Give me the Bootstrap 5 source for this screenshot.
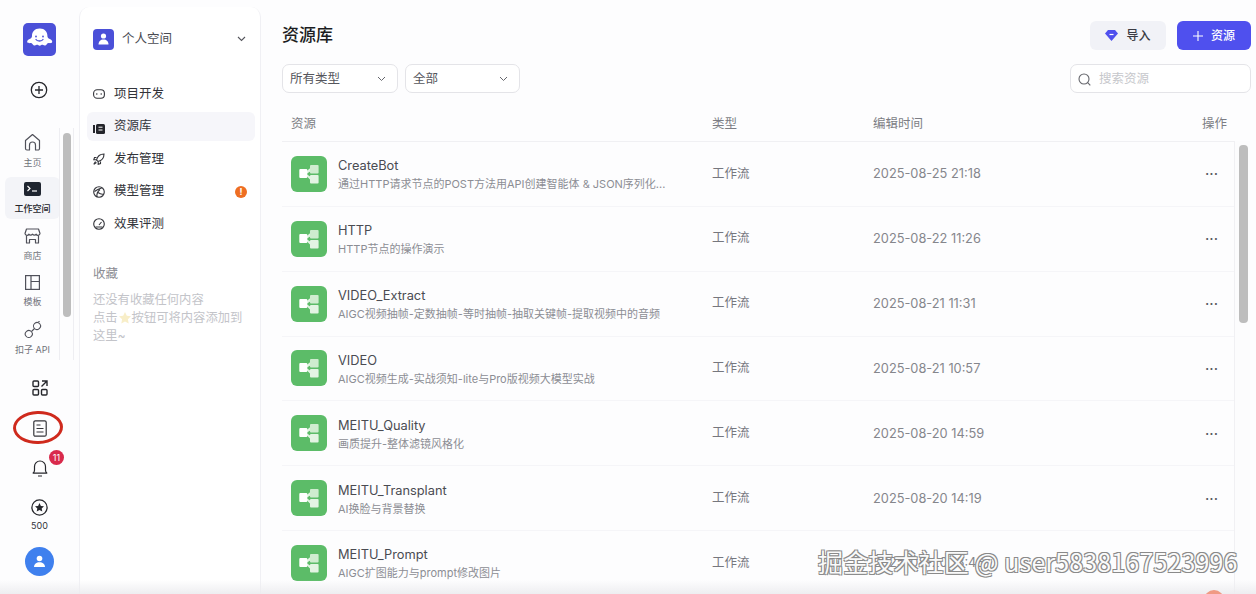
<!DOCTYPE html>
<html lang="zh-CN">

<head>
    <meta charset="UTF-8">
    <meta name="viewport" content="width=device-width, initial-scale=1.0">
    <title>资源库</title>
    <link rel="stylesheet" href="https://cdn.jsdelivr.net/npm/bootstrap@5.3.3/dist/css/bootstrap.min.css">
    <style>
        html, body {
            height: 594px;
            overflow: hidden;
        }

        body {
            font-family: "Inter", "Noto Sans CJK SC", sans-serif;
            background: #fdfdfe;
            color: #2c2d33;
            position: relative;
        }

        .app-shell {
            height: 594px;
        }

        /* rail on the far left */
        .rail {
            width: 79px;
            flex: none;
            padding-top: 23px;
            position: relative;
        }

        .logo-box {
            width: 33px;
            height: 33px;
            margin-left: 23px;
            border-radius: 5px;
            background: #4b50d8;
        }

        .rail-plus {
            margin: 25px 0 0 30px;
            height: 18px;
            line-height: 0;
        }

        .rail-scroll {
            margin-top: 29px;
            height: 232px;
            width: 74px;
            border-right: 1px solid #eeeef2;
            position: relative;
        }

        .rail-scroll::before {
            content: "";
            position: absolute;
            left: 59px;
            top: 0;
            bottom: 0;
            border-left: 1px solid #eeeef2;
        }

        .rail-item {
            width: 55px;
            margin-left: 5px;
            margin-bottom: 2px;
            border-radius: 6px;
            font-size: 9px;
            line-height: 12px;
            color: #70727a;
        }

        .rail-item svg {
            flex: none;
        }

        .rail-label {
            margin-top: 6px;
            white-space: nowrap;
        }

        .item-home { height: 47px; }
        .item-home svg { margin-top: 5px; }
        .item-shop { height: 45px; }
        .item-tpl { height: 44px; }
        .item-api .rail-label { margin-top: 5px; }

        .rail-item.is-on {
            background: #f3f4f8;
            color: #24252b;
            font-weight: 500;
            height: 42px;
            margin-bottom: 9px;
        }

        .is-on svg { margin-top: 5px; }
        .is-on .rail-label { margin-top: 7px; }

        .rail-bar {
            position: absolute;
            left: 63px;
            top: 5px;
            width: 8px;
            height: 184px;
            background: #bdbdbd;
            border-radius: 4px;
        }

        .rail-tools {
            margin-top: 20px;
        }

        .tool-slot {
            height: 39.5px;
        }

        .tool-count {
            margin-top: 5px;
            font-size: 9px;
            line-height: 10px;
            color: #34353a;
            text-align: center;
        }

        .note-ring {
            position: absolute;
            left: 13px;
            top: 411px;
            width: 50px;
            height: 33px;
            border: 3px solid #cf2a1d;
            border-radius: 50%;
            transform: rotate(-2deg);
        }

        .bell-badge {
            position: absolute;
            left: 49px;
            top: 450px;
            width: 15px;
            height: 15px;
            border-radius: 50%;
            background: #d92a4c;
            color: #fff;
            font-size: 9px;
            line-height: 15px;
            text-align: center;
        }

        .avatar-dot {
            width: 29px;
            height: 29px;
            border-radius: 50%;
            background: #3f80ee;
            margin: 16px 0 0 25px;
        }

        /* second column */
        .side-panel {
            width: 182px;
            flex: none;
            background: #fff;
            border-left: 1px solid #f0f0f4;
            border-right: 1px solid #f0f0f4;
            border-radius: 10px 10px 0 0;
            margin-top: 7px;
            padding: 21px 12px 0 13px;
        }

        .space-pick {
            height: 22px;
            font-size: 12.5px;
            color: #4a4b52;
        }

        .space-icon {
            width: 21px;
            height: 21px;
            border-radius: 4px;
            background: #4b50d8;
        }

        .space-chevron {
            margin-right: 2px;
        }

        .side-menu {
            margin-top: 29.5px;
        }

        .side-link {
            height: 29px;
            margin-bottom: 3.5px;
            padding: 0 8px 0 6px;
            margin-left: -6px;
            border-radius: 6px;
            font-size: 12.5px;
            color: #33343a;
            width: 168px;
        }

        .side-link svg {
            flex: none;
            margin-right: 9px;
        }

        .side-link.is-on {
            background: #f6f6fa;
        }

        .warn-dot {
            width: 12px;
            height: 12px;
            border-radius: 50%;
            background: #ee6e22;
            color: #fff;
            font-size: 9px;
            font-weight: 700;
            line-height: 12px;
            text-align: center;
        }

        .fav-title {
            margin-top: 26px;
            font-size: 12.5px;
            color: #8b8c93;
            line-height: 18px;
        }

        .fav-hint {
            margin-top: 8px;
            font-size: 12.3px;
            line-height: 18px;
            color: #c3c4c9;
            width: 155px;
        }

        .fav-star {
            vertical-align: -2px;
        }

        /* main part */
        .main-pane {
            flex: 1;
            min-width: 0;
            padding: 21px 5px 0 21px;
            position: relative;
        }

        .page-title {
            font-size: 17px;
            font-weight: 500;
            line-height: 26px;
            margin: 0 0 2px;
            color: #1c1d22;
        }

        .btn-import, .btn-add {
            height: 29px;
            border-radius: 6px;
            font-size: 12px;
            font-weight: 500;
            padding: 0;
            border: none;
        }

        .btn-import {
            width: 76px;
            background: #f1f2f7;
            color: #3a3b42;
        }

        .btn-add {
            width: 74px;
            margin-left: 11px;
            background: #4f50ee;
            color: #fff;
        }

        .btn-import:hover { background: #f1f2f7; color: #3a3b42; }
        .btn-add:hover { background: #4f50ee; color: #fff; }

        .filter-row {
            margin-top: 14px;
            height: 29px;
        }

        .pick-box {
            height: 29px;
            border: 1px solid #e4e4e8;
            border-radius: 7px;
            background: #fff;
            padding: 1px 7px 0;
            font-size: 12.5px;
            color: #55565c;
        }

        .pick-type { width: 116px; }
        .pick-all { width: 115px; margin-left: 7px; }

        .search-box {
            width: 181px;
            height: 29px;
            border: 1px solid #e4e4e8;
            border-radius: 7px;
            background: #fff;
            padding: 1px 7px 0;
            font-size: 12.5px;
            color: #c6c7cb;
        }

        .list-head {
            height: 49px;
            padding-top: 15px;
            font-size: 12.5px;
            color: #7c7d84;
            border-bottom: 1px solid #f0f0f3;
            padding-left: 9px;
            width: 952px;
        }

        .col-name { width: 421px; flex: none; }
        .col-type { width: 161px; flex: none; }
        .col-time { width: 332px; flex: none; }
        .list-head .col-time { width: 329px; }

        .res-row {
            height: 64.85px;
            padding-left: 9px;
            width: 952px;
            border-bottom: 1px solid #f5f5f8;
            font-size: 12.5px;
            color: #76777e;
        }

        .res-row .col-time {
            font-size: 12.8px;
            color: #85868c;
        }

        .res-icon {
            width: 36px;
            height: 36px;
            border-radius: 6px;
            background: #5cbc68;
            flex: none;
            margin-right: 11px;
        }

        .res-text {
            padding-top: 2px;
        }

        .res-title {
            font-size: 12.8px;
            line-height: 18px;
            color: #4a4b52;
        }

        .res-desc {
            margin-top: 1px;
            font-size: 11px;
            line-height: 16px;
            color: #8c8d94;
            white-space: nowrap;
        }

        .row-more {
            font-size: 15px;
            line-height: 15px;
            color: #55565c;
        }

        .list-bar-track {
            position: absolute;
            left: 973px;
            top: 141px;
            width: 16px;
            height: 453px;
            border-left: 1px solid #f0f0f3;
            background: #fcfcfd;
        }

        .list-bar {
            position: absolute;
            left: 4px;
            top: 4px;
            width: 9px;
            height: 178px;
            border-radius: 4px;
            background: #bdbdbd;
        }

        .bottom-fade {
            position: absolute;
            left: 0;
            right: 0;
            bottom: 0;
            height: 14px;
            background: linear-gradient(to bottom, rgba(240, 240, 243, 0), rgba(236, 236, 239, 0.9));
            pointer-events: none;
        }

        .corner-blob {
            position: absolute;
            left: 1204px;
            top: 590px;
            width: 20px;
            height: 20px;
            border-radius: 50%;
            background: #f09a84;
        }

        .site-mark {
            position: absolute;
            left: 818px;
            top: 544px;
            font-family: "Noto Sans CJK SC", sans-serif;
            font-size: 25px;
            line-height: 34px;
            letter-spacing: .15px;
            color: #fafafa;
            white-space: nowrap;
            text-shadow: -1px -1px 0 #8a8a8a, 1px -1px 0 #8a8a8a, -1px 1px 0 #8a8a8a, 1px 1px 0 #8a8a8a;
        }
    </style>
</head>

<body>
    <div class="app-shell d-flex">

        <!-- rail -->
        <div class="rail">
            <div class="logo-box d-flex align-items-center justify-content-center">
                <svg width="29" height="29" viewBox="0 0 29 29">
                    <path d="M14.500 3.500c-4.800 0-7.500 3.300-7.500 7.300 0 1.300-.5 2.300-1.800 3-1.500.7-3.400 1.600-3 3.200.3 1.200 1.900 1.300 3.200 1.100 1-.1 1.700.3 2.200 1.100.8 1.300 2.400 1.700 3.600.8.600-.4 1.300-.4 1.900 0 1 .9 2.200.9 3.200 0 .6-.4 1.300-.4 1.900 0 1.200.9 2.800.5 3.600-.8.500-.8 1.200-1.200 2.200-1.100 1.300.2 2.900.1 3.200-1.100.4-1.600-1.500-2.500-3-3.200-1.300-.7-1.800-1.700-1.800-3 0-4-2.700-7.300-7.500-7.300z" fill="#fff"/>
                    <circle cx="11" cy="11.500" r=".9" fill="#4b50d8"/>
                    <circle cx="18" cy="11.500" r=".9" fill="#4b50d8"/>
                    <path d="M11 14.500c1.200 2 5.800 2 7 0" fill="none" stroke="#4b50d8" stroke-width="1.300" stroke-linecap="round"/>
                </svg>
            </div>
            <div class="rail-plus">
                <svg width="18" height="18" viewBox="0 0 18 18" fill="none" stroke="#26272c" stroke-width="1.300">
                    <circle cx="9" cy="9" r="7.700"/>
                    <path d="M9 5v8M5 9h8"/>
                </svg>
            </div>
            <div class="rail-scroll">
                <div class="rail-item item-home d-flex flex-column align-items-center">
                    <svg width="17" height="18" viewBox="0 0 17 18" fill="none" stroke="#50515a" stroke-width="1.200" stroke-linejoin="round">
                        <path d="M1.500 7.500 8.500 1.500l7 6v8a1.500 1.500 0 0 1-1.500 1.500h-2.500v-5a3 3 0 0 0-6 0v5H3a1.500 1.500 0 0 1-1.500-1.500z"/>
                    </svg>
                    <span class="rail-label">主页</span>
                </div>
                <div class="rail-item is-on d-flex flex-column align-items-center">
                    <svg width="17" height="14" viewBox="0 0 17 14">
                        <rect width="17" height="14" rx="2" fill="#1f2530"/>
                        <path d="M3.500 4l2.500 2.500L3.500 9" fill="none" stroke="#fff" stroke-width="1.200"/>
                        <path d="M8 9h5" stroke="#fff" stroke-width="1.200"/>
                    </svg>
                    <span class="rail-label">工作空间</span>
                </div>
                <div class="rail-item item-shop d-flex flex-column align-items-center">
                    <svg width="17" height="16" viewBox="0 0 17 16" fill="none" stroke="#50515a" stroke-width="1.200" stroke-linejoin="round">
                        <path d="M2.500 1h12l1.500 4.500a2 2 0 0 1-3.800.7 2.300 2.300 0 0 1-3.700 0 2.300 2.300 0 0 1-3.700 0A2 2 0 0 1 1 5.500z"/>
                        <path d="M2.500 8v7h3v-3.500h6V15h3V8"/>
                    </svg>
                    <span class="rail-label">商店</span>
                </div>
                <div class="rail-item item-tpl d-flex flex-column align-items-center">
                    <svg width="15" height="15" viewBox="0 0 15 15" fill="none" stroke="#50515a" stroke-width="1.200">
                        <rect x=".6" y=".6" width="13.800" height="13.800"/>
                        <path d="M6 .6v13.800M6 6.500h8.400"/>
                    </svg>
                    <span class="rail-label">模板</span>
                </div>
                <div class="rail-item item-api d-flex flex-column align-items-center">
                    <svg width="18" height="18" viewBox="0 0 18 18" fill="none" stroke="#50515a" stroke-width="1.100">
                        <rect x="1.300" y="9.500" width="7" height="7" rx="3.500" transform="rotate(-40 4.800 13)"/>
                        <rect x="9.500" y="1.500" width="7" height="7" rx="3.500" transform="rotate(-40 13 5)"/>
                        <path d="M7.500 10.500 10.500 7.500M14.500 1l1-1"/>
                    </svg>
                    <span class="rail-label">扣子 API</span>
                </div>
                <div class="rail-bar"></div>
            </div>
            <div class="rail-tools">
                <div class="tool-slot d-flex justify-content-center">
                    <svg width="16" height="16" viewBox="0 0 16 16" fill="none" stroke="#26272c" stroke-width="1.400">
                        <rect x="1" y="1" width="5.500" height="5.500" rx="1"/>
                        <rect x="1" y="9.500" width="5.500" height="5.500" rx="1"/>
                        <rect x="9.500" y="9.500" width="5.500" height="5.500" rx="1"/>
                        <path d="M10 1h5v5M15 1 9.500 6.500"/>
                    </svg>
                </div>
                <div class="tool-slot d-flex justify-content-center">
                    <svg width="14" height="17" viewBox="0 0 14 17" fill="none" stroke="#34353a" stroke-width="1.200">
                        <rect x=".8" y=".8" width="12.400" height="15.400" rx="1.500"/>
                        <path d="M3.500 5h4M3.500 8.500h7M3.500 12h7"/>
                    </svg>
                </div>
                <div class="tool-slot d-flex justify-content-center">
                    <svg width="16" height="18" viewBox="0 0 16 18" fill="none" stroke="#26272c" stroke-width="1.200">
                        <path d="M.8 14.200c1.300-.6 1.700-1.500 1.700-3V7.500a5.500 5.500 0 0 1 11 0v3.700c0 1.500.4 2.400 1.700 3zM6 17h4"/>
                    </svg>
                </div>
                <div class="d-flex flex-column align-items-center">
                    <svg width="17" height="17" viewBox="0 0 17 17">
                        <circle cx="8.500" cy="8.500" r="7.600" fill="none" stroke="#26272c" stroke-width="1.300"/>
                        <path d="M8.500 4l1.400 2.900 3.100.4-2.300 2.200.6 3.100-2.800-1.500-2.800 1.500.6-3.100L4 7.300l3.100-.4z" fill="#26272c"/>
                    </svg>
                    <div class="tool-count">500</div>
                </div>
                <div class="avatar-dot d-flex align-items-center justify-content-center">
                    <svg width="13" height="13" viewBox="0 0 13 13" fill="#fff">
                        <circle cx="6.500" cy="3.500" r="2.800"/>
                        <path d="M1 12c0-3 2.500-4.800 5.500-4.800S12 9 12 12z"/>
                    </svg>
                </div>
            </div>
            <div class="note-ring"></div>
            <div class="bell-badge">11</div>
        </div>

        <!-- second column -->
        <div class="side-panel">
            <div class="space-pick d-flex align-items-center">
                <div class="space-icon d-flex align-items-center justify-content-center me-2">
                    <svg width="11" height="12" viewBox="0 0 11 12" fill="#fff">
                        <circle cx="5.500" cy="3" r="2.600"/>
                        <path d="M.5 11.500c0-3 2-5 5-5s5 2 5 5z"/>
                    </svg>
                </div>
                <span class="flex-grow-1">个人空间</span>
                <svg class="space-chevron" width="9" height="6" viewBox="0 0 9 6" fill="none" stroke="#55565c" stroke-width="1.100"><path d="M1 1l3.500 3.500L8 1"/></svg>
            </div>
            <div class="side-menu">
                <div class="side-link d-flex align-items-center">
                    <svg width="12" height="12" viewBox="0 0 12 12" fill="none" stroke="#33343a" stroke-width="1.100">
                        <rect x=".6" y="1.800" width="10.800" height="8.400" rx="3.500"/>
                        <path d="M3.800 5.200v1.500M8.200 5.200v1.500"/>
                    </svg>
                    <span>项目开发</span>
                </div>
                <div class="side-link is-on d-flex align-items-center">
                    <svg width="12" height="12" viewBox="0 0 12 12">
                        <rect x="0" y="2" width="2" height="8" fill="#24252b"/>
                        <rect x="3" y="1" width="9" height="10" rx="1.500" fill="#24252b"/>
                        <path d="M5.500 4.200h4M5.500 7h4" stroke="#fff"/>
                    </svg>
                    <span>资源库</span>
                </div>
                <div class="side-link d-flex align-items-center">
                    <svg width="12" height="12" viewBox="0 0 12 12" fill="none" stroke="#33343a" stroke-width="1.100">
                        <path d="M11 1C7.500 1 4.500 3 3.500 7L5 8.500C9 7.500 11 4.500 11 1z"/>
                        <path d="M3.500 4.500H1.500L.8 6.800h2.400M7.500 8.500v2l-2.300.8V8.800M2.500 8.500 .8 11.200l2.700-1.700"/>
                    </svg>
                    <span>发布管理</span>
                </div>
                <div class="side-link d-flex align-items-center">
                    <svg width="12" height="12" viewBox="0 0 12 12" fill="none" stroke="#33343a" stroke-width="1.100">
                        <circle cx="6" cy="6" r="5.300"/>
                        <path d="M1.500 5.500c2.500-2 5-3 7.500-3.800M4 11c-.5-3 .5-5.500 3-7.500M5 6.500c2 1.500 4 2 6 1.500"/>
                    </svg>
                    <span class="flex-grow-1">模型管理</span>
                    <span class="warn-dot">!</span>
                </div>
                <div class="side-link d-flex align-items-center">
                    <svg width="12" height="12" viewBox="0 0 12 12" fill="none" stroke="#33343a" stroke-width="1.100">
                        <circle cx="6" cy="6" r="5.300"/>
                        <path d="M6 7l2.500-3M2.500 9h7"/>
                    </svg>
                    <span>效果评测</span>
                </div>
            </div>
            <div class="fav-title">收藏</div>
            <div class="fav-hint">还没有收藏任何内容<br>点击<svg class="fav-star" width="14" height="13" viewBox="0 0 14 13"><path d="M7 1l1.800 3.800 4.200.5-3.100 2.900.8 4.200L7 10.400l-3.700 2 .8-4.200L1 5.300l4.200-.5z" fill="#f8eec8"/></svg>按钮可将内容添加到这里~</div>
        </div>

        <!-- main -->
        <div class="main-pane">
            <div class="d-flex align-items-center justify-content-between">
                <h1 class="page-title">资源库</h1>
                <div class="d-flex">
                    <button class="btn btn-import d-flex align-items-center justify-content-center gap-2">
                        <svg width="13" height="11" viewBox="0 0 13 11"><path d="M3 0h7l3 3.500L6.500 11 0 3.500z" fill="#4f50ee"/><path d="M4.500 4.500h4" stroke="#fff" stroke-width="1.200"/></svg>
                        导入
                    </button>
                    <button class="btn btn-add d-flex align-items-center justify-content-center gap-2">
                        <svg width="10" height="10" viewBox="0 0 10 10" stroke="#fff" stroke-width="1.100"><path d="M5 0v10M0 5h10"/></svg>
                        资源
                    </button>
                </div>
            </div>

            <div class="filter-row d-flex">
                <div class="pick-box pick-type d-flex align-items-center justify-content-between">
                    <span>所有类型</span>
                    <svg class="me-1" width="9" height="6" viewBox="0 0 9 6" fill="none" stroke="#66676d" stroke-width="1"><path d="M1 1l3.500 3.500L8 1"/></svg>
                </div>
                <div class="pick-box pick-all d-flex align-items-center justify-content-between">
                    <span>全部</span>
                    <svg class="me-1" width="9" height="6" viewBox="0 0 9 6" fill="none" stroke="#66676d" stroke-width="1"><path d="M1 1l3.500 3.500L8 1"/></svg>
                </div>
                <div class="search-box ms-auto d-flex align-items-center gap-2">
                    <svg width="13" height="13" viewBox="0 0 13 13" fill="none" stroke="#66676d" stroke-width="1.100"><circle cx="6" cy="6" r="5"/><path d="M9.700 9.700 12.300 12.300"/></svg>
                    <span>搜索资源</span>
                </div>
            </div>

            <div class="list-head d-flex align-items-center">
                <div class="col-name">资源</div>
                <div class="col-type">类型</div>
                <div class="col-time">编辑时间</div>
                <div>操作</div>
            </div>

            <div id="res-list"></div>

            <div class="list-bar-track"><div class="list-bar"></div></div>
        </div>
    </div>

    <div class="bottom-fade"></div>
    <div class="corner-blob"></div>
    <div class="site-mark">掘金技术社区 @ user5838167523996</div>

    <script>
        // list rows
        const resources = [
            ['CreateBot', '通过HTTP请求节点的POST方法用API创建智能体 &amp; JSON序列化...', '2025-08-25 21:18'],
            ['HTTP', 'HTTP节点的操作演示', '2025-08-22 11:26'],
            ['VIDEO_Extract', 'AIGC视频抽帧-定数抽帧-等时抽帧-抽取关键帧-提取视频中的音频', '2025-08-21 11:31'],
            ['VIDEO', 'AIGC视频生成-实战须知-lite与Pro版视频大模型实战', '2025-08-21 10:57'],
            ['MEITU_Quality', '画质提升-整体滤镜风格化', '2025-08-20 14:59'],
            ['MEITU_Transplant', 'AI换脸与背景替换', '2025-08-20 14:19'],
            ['MEITU_Prompt', 'AIGC扩图能力与prompt修改图片', '2025-08-20 13:46']
        ];

        const flowIcon = `<svg width="36" height="36" viewBox="0 0 36 36">
            <path d="M15 15.500 20 11.500v3.500L16 17.500zM15 19.500 20 24.500v-3.500L16 18.500z" fill="#e3f4e3"/>
            <rect x="8.300" y="13" width="8" height="9" rx="1" fill="#fff"/>
            <rect x="19" y="9" width="8.600" height="8.400" rx="1" fill="#cfeccf"/>
            <rect x="19" y="19" width="8.600" height="8.400" rx="1" fill="#e3f4e3"/>
        </svg>`;

        document.getElementById('res-list').innerHTML = resources.map(r => `
            <div class="res-row d-flex align-items-center">
                <div class="col-name d-flex align-items-center">
                    <div class="res-icon">${flowIcon}</div>
                    <div class="res-text">
                        <div class="res-title">${r[0]}</div>
                        <div class="res-desc">${r[1]}</div>
                    </div>
                </div>
                <div class="col-type">工作流</div>
                <div class="col-time">${r[2]}</div>
                <div class="row-more">···</div>
            </div>`).join('');
    </script>
    <script src="https://cdn.jsdelivr.net/npm/bootstrap@5.3.3/dist/js/bootstrap.bundle.min.js"></script>
</body>

</html>
